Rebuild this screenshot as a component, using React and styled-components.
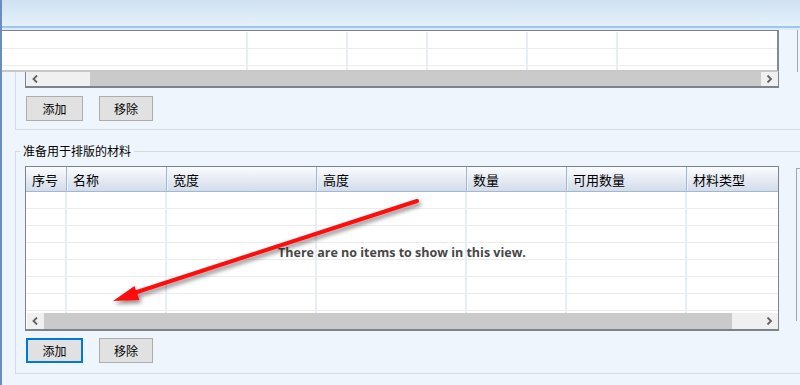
import React from "react";
import styled, { createGlobalStyle } from "styled-components";

const GlobalStyle = createGlobalStyle`
  html, body {
    margin: 0;
    padding: 0;
    background: #eef5fc;
  }
  body {
    font-family: "Noto Sans CJK SC", "Noto Sans", sans-serif;
    font-size: 12px;
    color: #000;
  }
`;

const topCols = [246, 100, 80, 100, 90, 159];
const matCols = [
  { title: "序号", w: 41 },
  { title: "名称", w: 100 },
  { title: "宽度", w: 150 },
  { title: "高度", w: 150 },
  { title: "数量", w: 100 },
  { title: "可用数量", w: 120 },
  { title: "材料类型", w: 90 },
];

function Chevron({ dir }) {
  const pts = dir === "left" ? "5,0.5 1.5,4 5,7.5" : "1.5,0.5 5,4 1.5,7.5";
  return (
    <svg width="7" height="8" viewBox="0 0 7 8">
      <polyline points={pts} fill="none" stroke="#5f5f5f" strokeWidth="1.8" />
    </svg>
  );
}

function HScroll({ before, thumb, h }) {
  return (
    <ScrollBar $h={h}>
      <ArrowBtn>
        <Chevron dir="left" />
      </ArrowBtn>
      <Track style={{ width: before }} />
      <Thumb style={{ width: thumb }} />
      <Track style={{ flex: 1 }} />
      <ArrowBtn>
        <Chevron dir="right" />
      </ArrowBtn>
    </ScrollBar>
  );
}

function App() {
  const rows = Array.from({ length: 8 });
  return (
    <Page>
      <GlobalStyle />
      <TitleBar />

      <TopStrip>
        <StubGrid>
          {[0, 1, 2].map((r) => (
            <BodyRow key={r}>
              {topCols.map((w, i) => (
                <BodyCell key={i} style={{ width: w }} $last={i === topCols.length - 1} />
              ))}
            </BodyRow>
          ))}
        </StubGrid>
        <SideEdge $h={42} />
      </TopStrip>

      <TopGroup>
        <ScrollFrame>
          <HScroll before={46} thumb={671} h={14} />
        </ScrollFrame>
        <ButtonRow>
          <Button $w={57}>添加</Button>
          <Button $w={54}>移除</Button>
        </ButtonRow>
      </TopGroup>

      <GroupBox>
        <Legend>准备用于排版的材料</Legend>
        <GroupInner>
          <LeftColumn>
            <GridFrame>
              <HeaderRow>
                {matCols.map((c, i) => (
                  <HeaderCell key={i} style={{ width: c.w }} $last={i === matCols.length - 1}>
                    {c.title}
                  </HeaderCell>
                ))}
              </HeaderRow>
              <GridBody>
                {rows.map((_, r) => (
                  <BodyRow key={r}>
                    {matCols.map((c, i) => (
                      <BodyCell key={i} style={{ width: c.w }} $last={i === matCols.length - 1} />
                    ))}
                  </BodyRow>
                ))}
                <EmptyText>There are no items to show in this view.</EmptyText>
              </GridBody>
              <HScroll before={0} thumb={688} h={16} />
            </GridFrame>
            <ButtonRow $bottom>
              <Button $w={57} $focus>
                添加
              </Button>
              <Button $w={54}>移除</Button>
            </ButtonRow>
          </LeftColumn>
          <SidePanel />
        </GroupInner>
      </GroupBox>

      <ArrowLayer width="800" height="385" viewBox="0 0 800 385">
        <defs>
          <filter id="shade" x="-10%" y="-30%" width="130%" height="180%">
            <feDropShadow dx="2" dy="3" stdDeviation="2" floodColor="#000" floodOpacity="0.45" />
          </filter>
        </defs>
        <g filter="url(#shade)">
          <line x1="417" y1="201" x2="134" y2="293" stroke="#ff0d0d" strokeWidth="4" strokeLinecap="round" />
          <polygon points="113,301 134.5,286 139.5,300" fill="#ff0d0d" />
        </g>
      </ArrowLayer>
    </Page>
  );
}

export default App;

const Page = styled.div`
  position: relative;
  width: 798px;
  height: 385px;
  overflow: hidden;
  border-left: 2px solid #6a8dbb;
  display: flex;
  flex-direction: column;
`;

const TitleBar = styled.div`
  flex: none;
  height: 26px;
  background: linear-gradient(#d0e1f1, #e3f1fc);
  border-bottom: 2px solid #a2c6e7;
  box-shadow: 0 2px 0 #dcebf8;
  margin-bottom: 2px;
`;

const TopStrip = styled.div`
  flex: none;
  display: flex;
  align-items: flex-start;
  gap: 18px;
`;

const StubGrid = styled.div`
  flex: none;
  width: 775px;
  height: 38px;
  background: #fff;
  border-top: 1px solid #7d838b;
  border-right: 2px solid #858b93;
  border-bottom: 2px solid #c8c8c8;
  padding-top: 1px;
  overflow: hidden;
  display: flex;
  flex-direction: column;
`;

const BodyRow = styled.div`
  flex: none;
  display: flex;
  height: 17px;
  border-bottom: 1px solid #ececec;
  box-sizing: border-box;
`;

const BodyCell = styled.div`
  flex: none;
  height: 100%;
  box-sizing: border-box;
  border-right: ${(p) => (p.$last ? "none" : "2px solid #e6edf7")};
`;

const SideEdge = styled.div`
  flex: none;
  height: ${(p) => p.$h}px;
  width: 10px;
  border-left: 1px solid #a4a8ad;
`;

const TopGroup = styled.div`
  flex: none;
  margin-left: 13px;
  margin-right: -20px;
  border-left: 1px solid #d5dbe1;
  border-bottom: 1px solid #d5dbe1;
  padding: 0 0 8px 9px;
`;

const ScrollFrame = styled.div`
  width: 752px;
  border: 1px solid #7d838b;
  border-top: none;
  border-bottom-width: 2px;
`;

const ScrollBar = styled.div`
  flex: none;
  display: flex;
  height: ${(p) => p.$h}px;
  background: #f0f0f0;
  margin-left: 1px;
`;

const ArrowBtn = styled.div`
  flex: none;
  width: 17px;
  display: flex;
  align-items: center;
  justify-content: center;
  background: #f0f0f0;
`;

const Track = styled.div`
  flex: none;
  background: #f0f0f0;
`;

const Thumb = styled.div`
  flex: none;
  background: #cacaca;
`;

const ButtonRow = styled.div`
  display: flex;
  gap: 16px;
  margin-top: ${(p) => (p.$bottom ? 7 : 8)}px;
  padding-left: 1px;
`;

const Button = styled.div`
  width: ${(p) => p.$w}px;
  height: 25px;
  box-sizing: border-box;
  background: #e1e1e1;
  border: ${(p) => (p.$focus ? "2px solid #0078d7" : "1px solid #adadad")};
  display: flex;
  align-items: center;
  justify-content: center;
  font-size: 12px;
  color: #000;
`;

const GroupBox = styled.fieldset`
  flex: none;
  margin: 13px -20px 0 13px;
  padding: 7px 0 10px 9px;
  border: 1px solid #d5dbe1;
  min-width: 0;
`;

const Legend = styled.legend`
  margin-left: -5px;
  padding: 0 3px;
  font-size: 12px;
  line-height: 16px;
  color: #000;
`;

const GroupInner = styled.div`
  display: flex;
  align-items: flex-start;
  gap: 17px;
`;

const LeftColumn = styled.div`
  flex: none;
  display: flex;
  flex-direction: column;
`;

const GridFrame = styled.div`
  width: 752px;
  border: 1px solid #7d838b;
  border-bottom-width: 2px;
  background: #fff;
  display: flex;
  flex-direction: column;
`;

const HeaderRow = styled.div`
  display: flex;
  height: 25px;
  box-sizing: border-box;
  background: linear-gradient(#fbfcfe, #d2dcea);
  border-bottom: 1px solid #a3b7d1;
`;

const HeaderCell = styled.div`
  flex: none;
  box-sizing: border-box;
  padding-left: 6px;
  display: flex;
  align-items: center;
  font-size: 13px;
  color: #000;
  border-right: ${(p) => (p.$last ? "none" : "1px solid #a6b9d3")};
  box-shadow: ${(p) => (p.$last ? "none" : "1px 0 0 #eef3f9")};
`;

const GridBody = styled.div`
  position: relative;
  height: 121px;
  overflow: hidden;
  display: flex;
  flex-direction: column;
`;

const EmptyText = styled.div`
  position: absolute;
  inset: 0;
  display: flex;
  align-items: center;
  justify-content: center;
  font-family: "Open Sans", "Noto Sans", sans-serif;
  font-weight: 700;
  font-size: 12.5px;
  color: #474747;
`;

const SidePanel = styled.div`
  flex: none;
  width: 40px;
  height: 152px;
  margin-top: 2px;
  border-left: 1px solid #a4a8ad;
  border-top: 1px solid #a4a8ad;
`;

const ArrowLayer = styled.svg`
  position: absolute;
  left: -2px;
  top: 0;
  pointer-events: none;
`;
